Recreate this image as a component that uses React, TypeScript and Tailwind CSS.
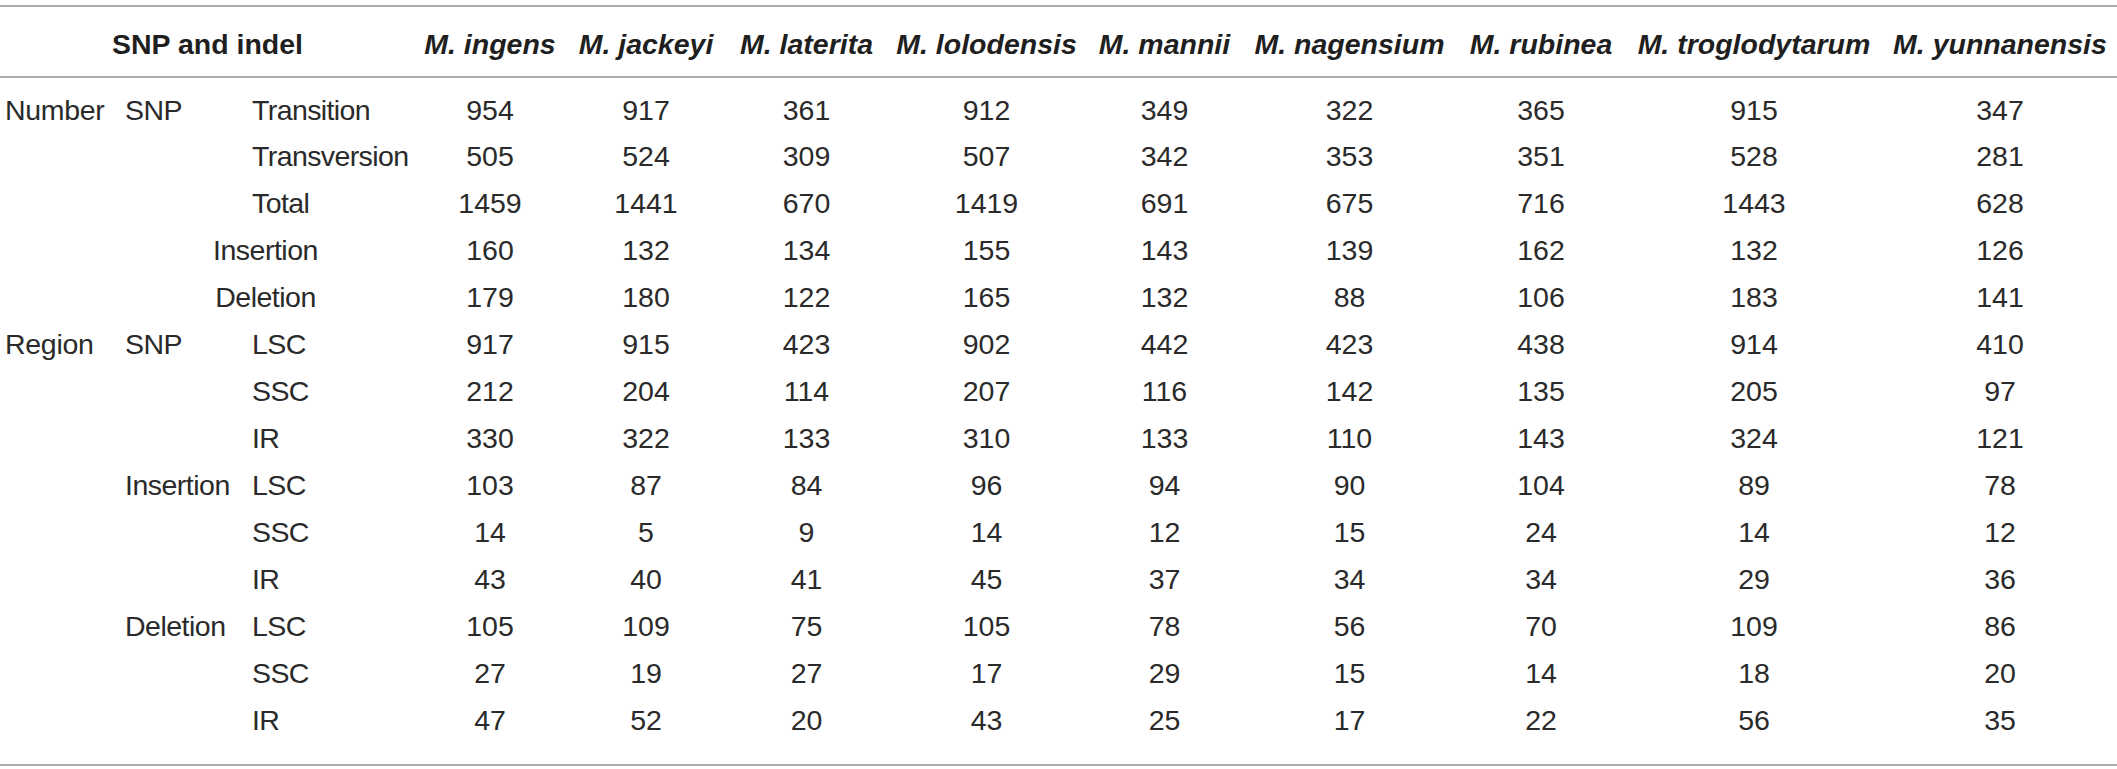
import React from 'react'

const SPECIES = [
  'ingens',
  'jackeyi',
  'laterita',
  'lolodensis',
  'mannii',
  'nagensium',
  'rubinea',
  'troglodytarum',
  'yunnanensis',
]

// column widths measured off the reference
const COL_WIDTHS = ['w-[116px]', 'w-[127px]', 'w-[172px]']
const DATA_WIDTHS = [
  'w-[150px]',
  'w-[162px]',
  'w-[159px]',
  'w-[201px]',
  'w-[155px]',
  'w-[215px]',
  'w-[168px]',
  'w-[258px]',
  'w-[234px]',
]

interface Row {
  group?: string
  kind?: string
  label?: string
  span?: boolean
  values: number[]
}

const ROWS: Row[] = [
  { group: 'Number', kind: 'SNP', label: 'Transition', values: [954, 917, 361, 912, 349, 322, 365, 915, 347] },
  { label: 'Transversion', values: [505, 524, 309, 507, 342, 353, 351, 528, 281] },
  { label: 'Total', values: [1459, 1441, 670, 1419, 691, 675, 716, 1443, 628] },
  { kind: 'Insertion', span: true, values: [160, 132, 134, 155, 143, 139, 162, 132, 126] },
  { kind: 'Deletion', span: true, values: [179, 180, 122, 165, 132, 88, 106, 183, 141] },
  { group: 'Region', kind: 'SNP', label: 'LSC', values: [917, 915, 423, 902, 442, 423, 438, 914, 410] },
  { label: 'SSC', values: [212, 204, 114, 207, 116, 142, 135, 205, 97] },
  { label: 'IR', values: [330, 322, 133, 310, 133, 110, 143, 324, 121] },
  { kind: 'Insertion', label: 'LSC', values: [103, 87, 84, 96, 94, 90, 104, 89, 78] },
  { label: 'SSC', values: [14, 5, 9, 14, 12, 15, 24, 14, 12] },
  { label: 'IR', values: [43, 40, 41, 45, 37, 34, 34, 29, 36] },
  { kind: 'Deletion', label: 'LSC', values: [105, 109, 75, 105, 78, 56, 70, 109, 86] },
  { label: 'SSC', values: [27, 19, 27, 17, 29, 15, 14, 18, 20] },
  { label: 'IR', values: [47, 52, 20, 43, 25, 17, 22, 56, 35] },
]

function BodyRow({ row, first, last }: { row: Row; first: boolean; last: boolean }) {
  const pad = first ? 'h-[56px] pt-[9px]' : last ? 'h-[68px] pb-[21px]' : 'h-[47px]'
  return (
    <tr>
      <td className={`${pad} pl-[5px] text-left tracking-[-0.3px]`}>{row.group ?? ''}</td>
      {row.span ? (
        <td colSpan={2} className={`${pad} text-center tracking-[-0.5px]`}>
          {row.kind}
        </td>
      ) : (
        <>
          <td className={`${pad} pl-[9px] text-left tracking-[-0.5px]`}>{row.kind ?? ''}</td>
          <td className={`${pad} pl-[9px] text-left tracking-[-0.6px]`}>{row.label}</td>
        </>
      )}
      {row.values.map((v, i) => (
        <td key={i} className={`${pad} text-center`}>
          {v}
        </td>
      ))}
    </tr>
  )
}

export default function App() {
  return (
    <div className="w-[2117px] h-[769px] bg-white pt-[5px] overflow-hidden">
      <table className="w-[2117px] table-fixed border-collapse font-['Liberation_Sans',Arial,sans-serif] text-[28.5px] leading-none text-[#2a2a2a]">
        <colgroup>
          {COL_WIDTHS.map((w, i) => (
            <col key={i} className={w} />
          ))}
          {DATA_WIDTHS.map((w, i) => (
            <col key={`d${i}`} className={w} />
          ))}
        </colgroup>
        <thead>
          <tr className="border-t-2 border-b-2 border-[#ababab]">
            <th colSpan={3} className="h-[71px] pt-[6px] text-center font-bold text-[#1f1f1f]">
              SNP and indel
            </th>
            {SPECIES.map((s) => (
              <th
                key={s}
                className="h-[71px] pt-[6px] text-center font-bold italic whitespace-nowrap text-[#1f1f1f]"
              >
                M. {s}
              </th>
            ))}
          </tr>
        </thead>
        <tbody className="border-b-2 border-[#ababab]">
          {ROWS.map((row, i) => (
            <BodyRow key={i} row={row} first={i === 0} last={i === ROWS.length - 1} />
          ))}
        </tbody>
      </table>
    </div>
  )
}
